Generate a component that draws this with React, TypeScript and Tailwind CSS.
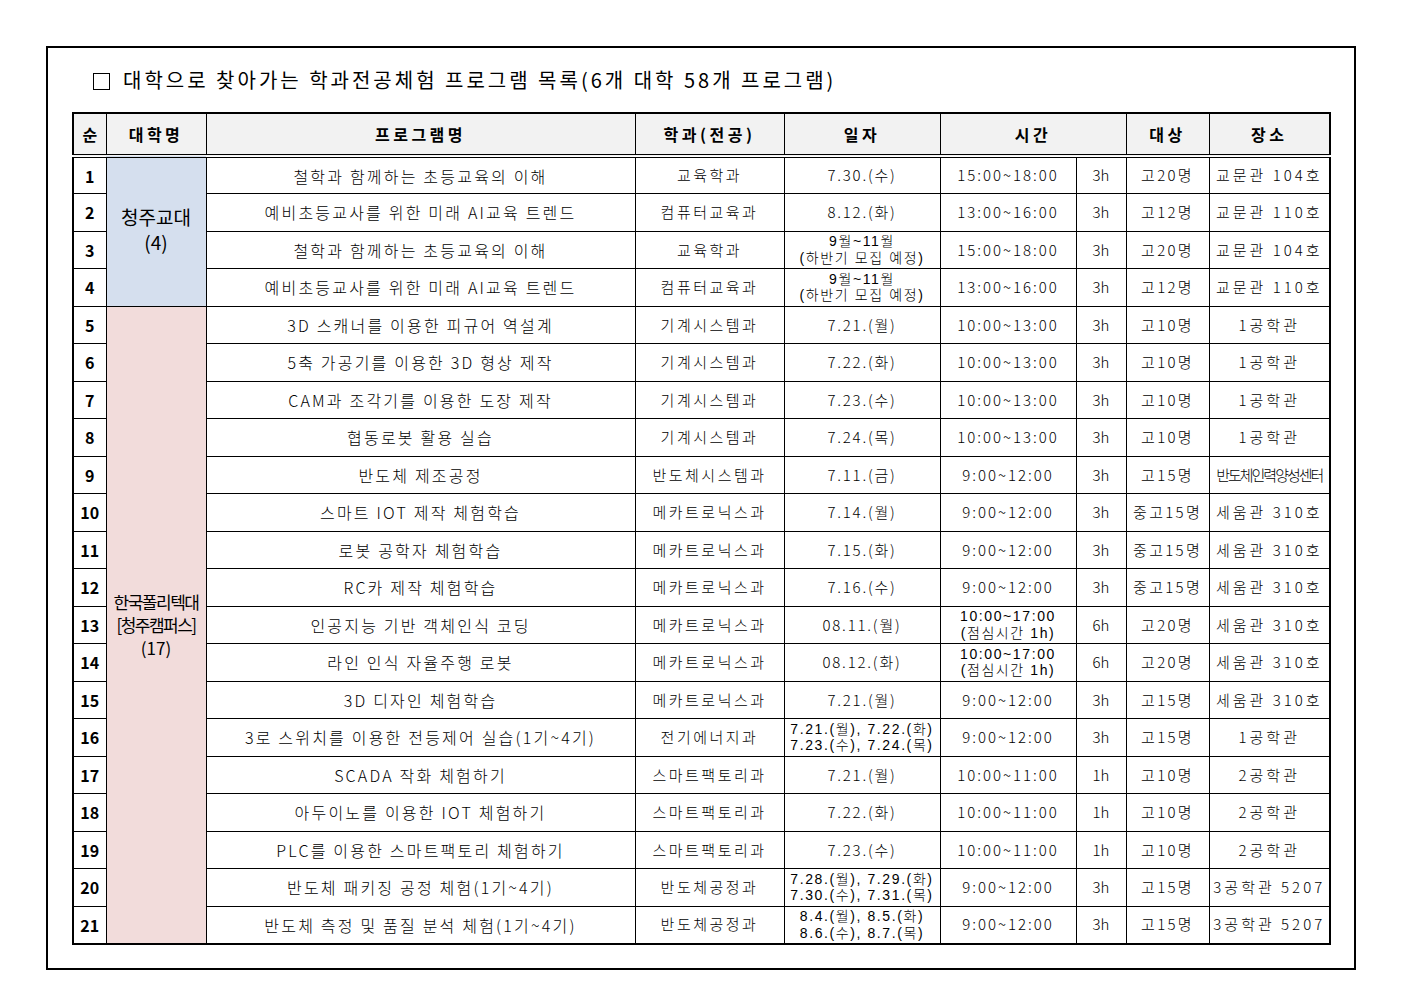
import React from "react";

type Row = {
  n: number;
  prog: string;
  dept: string;
  date: string[];
  time: string[];
  h: string;
  target: string;
  place: string;
  squeezePlace?: boolean;
};

const rows: Row[] = [
  { n: 1, prog: "철학과 함께하는 초등교육의 이해", dept: "교육학과", date: ["7.30.(수)"], time: ["15:00~18:00"], h: "3h", target: "고20명", place: "교문관 104호" },
  { n: 2, prog: "예비초등교사를 위한 미래 AI교육 트렌드", dept: "컴퓨터교육과", date: ["8.12.(화)"], time: ["13:00~16:00"], h: "3h", target: "고12명", place: "교문관 110호" },
  { n: 3, prog: "철학과 함께하는 초등교육의 이해", dept: "교육학과", date: ["9월~11월", "(하반기 모집 예정)"], time: ["15:00~18:00"], h: "3h", target: "고20명", place: "교문관 104호" },
  { n: 4, prog: "예비초등교사를 위한 미래 AI교육 트렌드", dept: "컴퓨터교육과", date: ["9월~11월", "(하반기 모집 예정)"], time: ["13:00~16:00"], h: "3h", target: "고12명", place: "교문관 110호" },
  { n: 5, prog: "3D 스캐너를 이용한 피규어 역설계", dept: "기계시스템과", date: ["7.21.(월)"], time: ["10:00~13:00"], h: "3h", target: "고10명", place: "1공학관" },
  { n: 6, prog: "5축 가공기를 이용한 3D 형상 제작", dept: "기계시스템과", date: ["7.22.(화)"], time: ["10:00~13:00"], h: "3h", target: "고10명", place: "1공학관" },
  { n: 7, prog: "CAM과 조각기를 이용한 도장 제작", dept: "기계시스템과", date: ["7.23.(수)"], time: ["10:00~13:00"], h: "3h", target: "고10명", place: "1공학관" },
  { n: 8, prog: "협동로봇 활용 실습", dept: "기계시스템과", date: ["7.24.(목)"], time: ["10:00~13:00"], h: "3h", target: "고10명", place: "1공학관" },
  { n: 9, prog: "반도체 제조공정", dept: "반도체시스템과", date: ["7.11.(금)"], time: ["9:00~12:00"], h: "3h", target: "고15명", place: "반도체인력양성센터", squeezePlace: true },
  { n: 10, prog: "스마트 IOT 제작 체험학습", dept: "메카트로닉스과", date: ["7.14.(월)"], time: ["9:00~12:00"], h: "3h", target: "중고15명", place: "세움관 310호" },
  { n: 11, prog: "로봇 공학자 체험학습", dept: "메카트로닉스과", date: ["7.15.(화)"], time: ["9:00~12:00"], h: "3h", target: "중고15명", place: "세움관 310호" },
  { n: 12, prog: "RC카 제작 체험학습", dept: "메카트로닉스과", date: ["7.16.(수)"], time: ["9:00~12:00"], h: "3h", target: "중고15명", place: "세움관 310호" },
  { n: 13, prog: "인공지능 기반 객체인식 코딩", dept: "메카트로닉스과", date: ["08.11.(월)"], time: ["10:00~17:00", "(점심시간 1h)"], h: "6h", target: "고20명", place: "세움관 310호" },
  { n: 14, prog: "라인 인식 자율주행 로봇", dept: "메카트로닉스과", date: ["08.12.(화)"], time: ["10:00~17:00", "(점심시간 1h)"], h: "6h", target: "고20명", place: "세움관 310호" },
  { n: 15, prog: "3D 디자인 체험학습", dept: "메카트로닉스과", date: ["7.21.(월)"], time: ["9:00~12:00"], h: "3h", target: "고15명", place: "세움관 310호" },
  { n: 16, prog: "3로 스위치를 이용한 전등제어 실습(1기~4기)", dept: "전기에너지과", date: ["7.21.(월), 7.22.(화)", "7.23.(수), 7.24.(목)"], time: ["9:00~12:00"], h: "3h", target: "고15명", place: "1공학관" },
  { n: 17, prog: "SCADA 작화 체험하기", dept: "스마트팩토리과", date: ["7.21.(월)"], time: ["10:00~11:00"], h: "1h", target: "고10명", place: "2공학관" },
  { n: 18, prog: "아두이노를 이용한 IOT 체험하기", dept: "스마트팩토리과", date: ["7.22.(화)"], time: ["10:00~11:00"], h: "1h", target: "고10명", place: "2공학관" },
  { n: 19, prog: "PLC를 이용한 스마트팩토리 체험하기", dept: "스마트팩토리과", date: ["7.23.(수)"], time: ["10:00~11:00"], h: "1h", target: "고10명", place: "2공학관" },
  { n: 20, prog: "반도체 패키징 공정 체험(1기~4기)", dept: "반도체공정과", date: ["7.28.(월), 7.29.(화)", "7.30.(수), 7.31.(목)"], time: ["9:00~12:00"], h: "3h", target: "고15명", place: "3공학관 5207" },
  { n: 21, prog: "반도체 측정 및 품질 분석 체험(1기~4기)", dept: "반도체공정과", date: ["8.4.(월), 8.5.(화)", "8.6.(수), 8.7.(목)"], time: ["9:00~12:00"], h: "3h", target: "고15명", place: "3공학관 5207" },
];

const font = { fontFamily: '"Noto Sans CJK KR", "Noto Sans", sans-serif' };

function Multi({ lines, wide }: { lines: string[]; wide?: boolean }) {
  if (lines.length === 1) return <span>{lines[0]}</span>;
  return (
    <div
      className={
        "flex flex-col items-center text-[14px] leading-[16.5px] font-['Liberation_Sans','Noto_Sans_CJK_KR',sans-serif] " +
        (wide ? "tracking-[1.6px]" : "tracking-[1.6px]")
      }
    >
      {lines.map((l, i) => (
        <span key={i} className="whitespace-nowrap">
          {l}
        </span>
      ))}
    </div>
  );
}

export default function App() {
  const td = "border border-black text-center align-middle p-0 whitespace-nowrap";
  const th =
    "border border-black border-double border-b-[4px] text-center align-middle p-0 font-bold text-[16px] tracking-[3.5px] bg-[#f2f2f2]";
  return (
    <div className="bg-white w-[1403px] h-[992px] pt-[46px] pl-[46px]" style={font}>
      <div className="w-[1310px] h-[924px] border-2 border-black px-[24px]">
        <div className="h-[64px] flex items-center pl-[21px] text-[20px] tracking-[3px] text-black">
          <span className="inline-block w-[17px] h-[17px] border border-black mr-[13px] translate-y-[1px]"></span>
          <span>대학으로 찾아가는 학과전공체험 프로그램 목록(6개 대학 58개 프로그램)</span>
        </div>
        <table className="border-collapse border-2 border-black w-[1257px] table-fixed text-black">
          <colgroup>
            <col className="w-[33px]" />
            <col className="w-[100px]" />
            <col className="w-[429px]" />
            <col className="w-[149px]" />
            <col className="w-[156px]" />
            <col className="w-[136px]" />
            <col className="w-[50px]" />
            <col className="w-[83px]" />
            <col className="w-[121px]" />
          </colgroup>
          <thead>
            <tr className="h-[43px]">
              <th className={th + " tracking-normal"}>순</th>
              <th className={th}>대학명</th>
              <th className={th}>프로그램명</th>
              <th className={th + " tracking-[1px]"}>학과(전공)</th>
              <th className={th}>일자</th>
              <th className={th} colSpan={2}>
                시간
              </th>
              <th className={th}>대상</th>
              <th className={th}>장소</th>
            </tr>
          </thead>
          <tbody className="text-[15px] font-light">
            {rows.map((r) => (
              <tr key={r.n} className="h-[37.5px]">
                <td className={td + " font-bold text-[16px]"}>{r.n}</td>
                {r.n === 1 && (
                  <td rowSpan={4} className={td + " bg-[#d5dfee] font-normal text-[19px] leading-[25px] pb-[6px]"}>
                    청주교대
                    <br />
                    (4)
                  </td>
                )}
                {r.n === 5 && (
                  <td
                    rowSpan={17}
                    className={td + " bg-[#f2dcdb] font-normal text-[17px] leading-[23px] tracking-[-1.5px]"}
                  >
                    한국폴리텍대
                    <br />
                    [청주캠퍼스]
                    <br />
                    <span className="tracking-normal">(17)</span>
                  </td>
                )}
                <td className={td + " text-[16px] tracking-[2.2px]"}>{r.prog}</td>
                <td className={td + " tracking-[2.5px]"}>{r.dept}</td>
                <td className={td + " tracking-[1.8px]"}>
                  <Multi lines={r.date} wide />
                </td>
                <td className={td + " tracking-[2px]"}>
                  <Multi lines={r.time} />
                </td>
                <td className={td}>{r.h}</td>
                <td className={td + " tracking-[2.3px]"}>{r.target}</td>
                <td className={td + (r.squeezePlace ? " tracking-[-2px] text-[15px]" : " tracking-[3px]")}>
                  {r.place}
                </td>
              </tr>
            ))}
          </tbody>
        </table>
      </div>
    </div>
  );
}
